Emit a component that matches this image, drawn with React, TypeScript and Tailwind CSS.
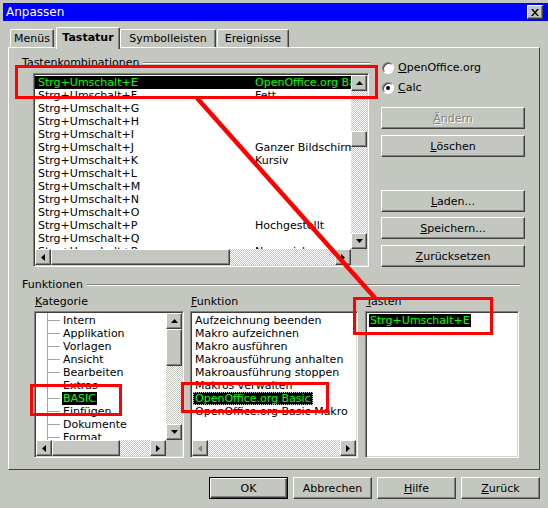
import React from "react"

type Dir = "up" | "down" | "left" | "right"

const keyRows: [string, string][] = [
  ["Strg+Umschalt+E", "OpenOffice.org Basic"],
  ["Strg+Umschalt+F", "Fett"],
  ["Strg+Umschalt+G", ""],
  ["Strg+Umschalt+H", ""],
  ["Strg+Umschalt+I", ""],
  ["Strg+Umschalt+J", "Ganzer Bildschirm"],
  ["Strg+Umschalt+K", "Kursiv"],
  ["Strg+Umschalt+L", ""],
  ["Strg+Umschalt+M", ""],
  ["Strg+Umschalt+N", ""],
  ["Strg+Umschalt+O", ""],
  ["Strg+Umschalt+P", "Hochgestellt"],
  ["Strg+Umschalt+Q", ""],
  ["Strg+Umschalt+R", "Neu zeichnen"],
]

const categories = [
  "Intern",
  "Applikation",
  "Vorlagen",
  "Ansicht",
  "Bearbeiten",
  "Extras",
  "BASIC",
  "Einfügen",
  "Dokumente",
  "Format",
]

const functions = [
  "Aufzeichnung beenden",
  "Makro aufzeichnen",
  "Makro ausführen",
  "Makroausführung anhalten",
  "Makroausführung stoppen",
  "Makros verwalten",
  "OpenOffice.org Basic",
  "OpenOffice.org Basic Makro",
]

const raised =
  "border border-t-white border-l-white border-r-[#404040] border-b-[#404040] shadow-[inset_-1px_-1px_0_#808080]"
const sunken =
  "border border-t-[#808080] border-l-[#808080] border-b-white border-r-white shadow-[inset_1px_1px_0_#404040,inset_-1px_-1px_0_#d4d6d0] p-px"
const track =
  "bg-[#dfe1dc] bg-[image:repeating-conic-gradient(#c4c7c0_0_25%,#ffffff_0_50%)] bg-[length:2px_2px]"

function Tri({ dir, color }: { dir: Dir; color: string }) {
  const vert = dir === "up" || dir === "down"
  const points = {
    up: "0,4 3.5,0 7,4",
    down: "0,0 7,0 3.5,4",
    left: "4,0 4,7 0,3.5",
    right: "0,0 0,7 4,3.5",
  }[dir]
  return (
    <svg width={vert ? 7 : 4} height={vert ? 4 : 7} viewBox={vert ? "0 0 7 4" : "0 0 4 7"}>
      <polygon points={points} fill={color} />
    </svg>
  )
}

function ScrollBtn({ dir, disabled }: { dir: Dir; disabled?: boolean }) {
  return (
    <div className={`flex h-[16px] w-[16px] shrink-0 items-center justify-center bg-[#c4c7c0] ${raised}`}>
      <Tri dir={dir} color={disabled ? "#808080" : "#000"} />
    </div>
  )
}

function Thumb({ className }: { className: string }) {
  return <div className={`shrink-0 bg-[#c4c7c0] ${raised} ${className}`} />
}

function Button({
  children,
  className = "",
  disabled,
  primary,
}: {
  children: React.ReactNode
  className?: string
  disabled?: boolean
  primary?: boolean
}) {
  const frame = primary
    ? "border border-black shadow-[inset_1px_1px_0_#fff,inset_-1px_-1px_0_#404040,inset_-2px_-2px_0_#808080]"
    : raised
  return (
    <div
      className={`flex h-[22px] items-center justify-center whitespace-nowrap ${frame} ${
        disabled ? "text-[#808080] [text-shadow:1px_1px_0_#ffffff]" : ""
      } ${className}`}
    >
      {children}
    </div>
  )
}

function Radio({ label, checked, className = "" }: { label: React.ReactNode; checked?: boolean; className?: string }) {
  return (
    <div className={`flex h-[13px] items-center ${className}`}>
      <div className="ml-px flex h-[12px] w-[12px] items-center justify-center rounded-full border border-t-[#808080] border-l-[#808080] border-b-white border-r-white bg-white shadow-[inset_1px_1px_0_#404040]">
        {checked && <div className="h-[4px] w-[4px] rounded-full bg-black" />}
      </div>
      <span className="ml-[4px]">{label}</span>
    </div>
  )
}

function FixedLine({ label, className }: { label: string; className: string }) {
  return (
    <div className={`flex h-[13px] items-center ${className}`}>
      <span className="whitespace-nowrap">{label}</span>
      <div className="ml-[4px] h-[2px] flex-1 border-t border-b border-t-[#808080] border-b-white" />
    </div>
  )
}

function KeyList() {
  return (
    <div className={`h-[194px] w-[336px] bg-white ${sunken}`}>
      <div className="flex h-[174px]">
        <div className="h-[174px] w-[316px] overflow-hidden pt-px">
          {keyRows.map(([keys, cmd], i) => (
            <div
              key={keys}
              className={`flex h-[13px] items-center whitespace-nowrap ${i === 0 ? "bg-black text-[#00ff00]" : ""}`}
            >
              <span className="w-[220px] shrink-0 pl-[3px]">{keys}</span>
              <span>{cmd}</span>
            </div>
          ))}
        </div>
        <div className={`flex w-[16px] flex-col ${track}`}>
          <ScrollBtn dir="up" />
          <div className="h-[40px]" />
          <Thumb className="h-[16px] w-[16px]" />
          <div className="flex-1" />
          <ScrollBtn dir="down" />
        </div>
      </div>
      <div className="flex h-[16px]">
        <div className={`flex w-[316px] ${track}`}>
          <ScrollBtn dir="left" />
          <Thumb className="h-[16px] w-[179px]" />
          <div className="flex-1" />
          <ScrollBtn dir="right" />
        </div>
        <div className="w-[16px] bg-[#c4c7c0]" />
      </div>
    </div>
  )
}

function CategoryList() {
  return (
    <div className={`mt-[3px] h-[147px] w-[150px] bg-white ${sunken}`}>
      <div className="flex h-[127px]">
        <div className="h-[127px] w-[130px] overflow-hidden">
          <div className="ml-[11px] h-px border-l border-[#a0a8a0]" />
          {categories.map((c) => (
            <div key={c} className="flex h-[13px] items-center whitespace-nowrap">
              <div className="ml-[11px] flex w-[13px] shrink-0 flex-col self-stretch">
                <div className="h-[7px] border-l border-b border-[#a0a8a0]" />
                <div className="h-[6px] border-l border-[#a0a8a0]" />
              </div>
              <span className={`ml-[2px] px-px ${c === "BASIC" ? "bg-black text-[#00ff00]" : ""}`}>{c}</span>
            </div>
          ))}
        </div>
        <div className={`flex w-[16px] flex-col ${track}`}>
          <ScrollBtn dir="up" />
          <Thumb className="h-[37px] w-[16px]" />
          <div className="flex-1" />
          <ScrollBtn dir="down" />
        </div>
      </div>
      <div className="flex h-[16px]">
        <div className={`flex w-[130px] ${track}`}>
          <ScrollBtn dir="left" />
          <Thumb className="h-[16px] w-[68px]" />
          <div className="flex-1" />
          <ScrollBtn dir="right" />
        </div>
        <div className="w-[16px] bg-[#c4c7c0]" />
      </div>
    </div>
  )
}

function FunctionList() {
  return (
    <div className={`mt-[3px] h-[147px] w-[168px] bg-white ${sunken}`}>
      <div className="h-[127px] overflow-hidden pt-px">
        {functions.map((f) => (
          <div key={f} className="flex h-[13px] items-center whitespace-nowrap pl-px">
            <span
              className={
                f === "OpenOffice.org Basic"
                  ? "border border-dotted border-[#c0c0c0] bg-black px-px leading-[11px] text-[#00ff00]"
                  : "px-[2px]"
              }
            >
              {f}
            </span>
          </div>
        ))}
      </div>
      <div className={`flex h-[16px] ${track}`}>
        <ScrollBtn dir="left" disabled />
        <div className="flex-1" />
        <ScrollBtn dir="right" />
      </div>
    </div>
  )
}

function KeysBox() {
  return (
    <div className={`mt-[3px] h-[147px] w-[154px] bg-white ${sunken}`}>
      <div className="flex h-[13px] items-center pl-[2px] pt-px">
        <span className="bg-black px-px text-[#00ff00]">Strg+Umschalt+E</span>
      </div>
    </div>
  )
}

function Annotations() {
  return (
    <div className="pointer-events-none absolute inset-0">
      <div className="absolute left-[15px] top-[65px] h-[34px] w-[363px] border-[3px] border-[#ff0000]" />
      <div className="absolute left-[353px] top-[297px] h-[38px] w-[140px] border-[3px] border-[#ff0000]" />
      <div className="absolute left-[30px] top-[384px] h-[32px] w-[92px] border-[3px] border-[#ff0000]" />
      <div className="absolute left-[181px] top-[382px] h-[31px] w-[148px] border-[3px] border-[#ff0000]" />
      <svg className="absolute inset-0" width="548" height="508">
        <line x1="197" y1="98" x2="375" y2="298" stroke="#ff0000" strokeWidth="4.5" />
      </svg>
    </div>
  )
}

export default function App() {
  return (
    <div className="relative h-[508px] w-[548px] overflow-hidden bg-[#c4c7c0] pl-[3px] pt-[3px] text-[11px] leading-[13px] text-black [font-family:'DejaVu_Sans',sans-serif]">
      {/* title bar */}
      <div className="flex h-[18px] items-center justify-between bg-[#0000ff] pl-[3px] pr-[5px]">
        <span className="text-[12px] text-white">Anpassen</span>
        <div className={`flex h-[14px] w-[16px] items-center justify-center bg-[#c4c7c0] ${raised}`}>
          <svg width="8" height="7" viewBox="0 0 8 7">
            <path d="M0 0h2l2 2.4L6 0h2L5 3.5 8 7H6L4 4.6 2 7H0l3-3.5z" fill="#000" />
          </svg>
        </div>
      </div>

      {/* tabs */}
      <div className="ml-[7px] mt-[6px] flex h-[20px] items-end">
        <div className="flex h-[18px] w-[44px] items-center justify-center rounded-t-[2px] border-l border-t border-r border-l-white border-t-white border-r-[#404040] shadow-[inset_-1px_0_0_#808080]">
          Menüs
        </div>
        <div className="relative z-10 -mb-[2px] ml-[2px] flex h-[22px] w-[64px] items-center justify-center rounded-t-[2px] border-l border-t border-r border-l-white border-t-white border-r-[#404040] bg-[#c4c7c0] pb-[2px] font-bold shadow-[inset_-1px_0_0_#808080]">
          Tastatur
        </div>
        <div className="flex h-[18px] w-[96px] items-center justify-center rounded-t-[2px] border-l border-t border-r border-l-white border-t-white border-r-[#404040] shadow-[inset_-1px_0_0_#808080]">
          Symbolleisten
        </div>
        <div className="ml-px flex h-[18px] w-[72px] items-center justify-center rounded-t-[2px] border-l border-t border-r border-l-white border-t-white border-r-[#404040] shadow-[inset_-1px_0_0_#808080]">
          Ereignisse
        </div>
      </div>

      {/* tab page */}
      <div className="ml-[5px] h-[423px] w-[532px] border border-t-white border-l-white border-r-[#404040] border-b-[#404040]">
        <div className="flex">
          <div className="w-[369px]">
            <FixedLine label="Tastenkombinationen" className="ml-[13px] mt-[8px] w-[348px]" />
            <div className="ml-[24px] mt-[4px]">
              <KeyList />
            </div>
          </div>
          <div className="ml-[3px] mt-[13px] w-[144px]">
            <Radio
              label={
                <>
                  <span className="underline">O</span>penOffice.org
                </>
              }
            />
            <Radio
              checked
              className="mt-[7px]"
              label={
                <>
                  <span className="underline">C</span>alc
                </>
              }
            />
            <Button disabled className="mt-[13px]">
              <span className="underline">Ä</span>ndern
            </Button>
            <Button className="mt-[6px]">
              <span className="underline">L</span>öschen
            </Button>
            <Button className="mt-[33px]">
              <span className="underline">L</span>aden...
            </Button>
            <Button className="mt-[5px]">
              <span className="underline">S</span>peichern...
            </Button>
            <Button className="mt-[6px]">
              <span className="underline">Z</span>urücksetzen
            </Button>
          </div>
        </div>

        <FixedLine label="Funktionen" className="ml-[13px] mt-[11px] w-[498px]" />

        <div className="mt-[4px] flex">
          <div className="ml-[25px] w-[150px]">
            <div className="h-[13px] pl-px">
              <span className="underline">K</span>ategorie
            </div>
            <CategoryList />
          </div>
          <div className="ml-[6px] w-[168px]">
            <div className="h-[13px] pl-px">
              <span className="underline">F</span>unktion
            </div>
            <FunctionList />
          </div>
          <div className="ml-[7px] w-[154px]">
            <div className="h-[13px] pl-px">
              <span className="underline">T</span>asten
            </div>
            <KeysBox />
          </div>
        </div>
      </div>

      {/* dialog buttons */}
      <div className="mt-[7px] flex justify-end gap-[5px] pr-[8px]">
        <Button primary className="w-[79px]">
          OK
        </Button>
        <Button className="w-[79px]">Abbrechen</Button>
        <Button className="w-[79px]">
          <span className="underline">H</span>ilfe
        </Button>
        <Button className="w-[79px]">
          <span className="underline">Z</span>urück
        </Button>
      </div>

      <Annotations />
    </div>
  )
}
